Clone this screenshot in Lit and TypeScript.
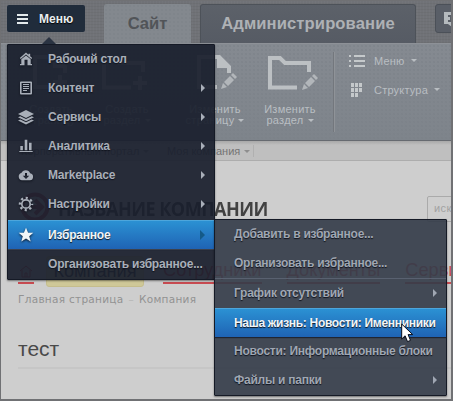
import { LitElement, html, css, svg, nothing } from "lit";
import { customElement, property } from "lit/decorators.js";
import { classMap } from "lit/directives/class-map.js";

const icons: Record<string, unknown> = {
  home: svg`<path d="M8 1.5 1.8 7l.9 1L8 3.4 13.3 8l.9-1-2-1.8V2.8h-1.7v1zM3.3 8.2V13H2v1.2h4.5V8.8h3v5.4H14V13h-1.3V8.2L8 4.4z"/>`,
  content: svg`<path fill-rule="evenodd" d="M3 1.5h10a1 1 0 0 1 1 1v11a1 1 0 0 1-1 1H3a1 1 0 0 1-1-1v-11a1 1 0 0 1 1-1zM3.6 3v10h8.8V3zM5 4h6v1.1H5zm0 2h6v1.1H5zm0 2h6v1.1H5zm0 2h4v1.1H5z"/>`,
  services: svg`<path d="M8 1 16 5 8 9 0 5zM2.3 7.2 8 10l5.7-2.8L16 8.3l-8 4-8-4zM2.3 10.5 8 13.3l5.7-2.8 2.3 1.1-8 4-8-4z"/>`,
  analytics: svg`<path d="M2.3 8h2.6v4.3H2.3zM6.7 1.7h2.6v10.6H6.7zM11 4.8h2.6v7.5H11zM1.3 12.9h13.4v1.2H1.3z"/>`,
  market: svg`<path fill-rule="evenodd" d="M4 13.3a3.7 3.7 0 0 1-.7-7.2A4.8 4.8 0 0 1 12.2 6.2a3.6 3.6 0 0 1-.3 7.1zM7 6v2.7H4.8L8 12l3.2-3.3H9V6z"/>`,
  settings: svg`<g fill="none" stroke="currentColor"><circle cx="8" cy="8" r="4.2" stroke-width="1.7"/><circle cx="8" cy="8" r="6.1" stroke-width="2.3" stroke-dasharray="2.2 2.59" stroke-dashoffset="1.1"/></g>`,
  star: svg`<path d="m8 .8 2.1 5h5.2l-4.1 3.4 1.5 5.3L8 11.4l-4.7 3.1 1.5-5.3L.7 5.8h5.2z"/>`,
};

interface Item {
  label: string;
  icon?: string;
  arrow?: boolean;
  active?: boolean;
  gap?: boolean;
}

const mainItems: Item[] = [
  { label: "Рабочий стол", icon: "home" },
  { label: "Контент", icon: "content", arrow: true },
  { label: "Сервисы", icon: "services", arrow: true },
  { label: "Аналитика", icon: "analytics", arrow: true },
  { label: "Marketplace", icon: "market", arrow: true },
  { label: "Настройки", icon: "settings", arrow: true },
  { label: "Избранное", icon: "star", arrow: true, active: true, gap: true },
  { label: "Организовать избранное...", gap: true },
];

const favItems: Item[] = [
  { label: "Добавить в избранное..." },
  { label: "Организовать избранное..." },
  { label: "График отсутствий", arrow: true, gap: true },
  { label: "Наша жизнь: Новости: Именниники", active: true },
  { label: "Новости: Информационные блоки" },
  { label: "Файлы и папки", arrow: true },
];

@customElement("drop-menu")
class DropMenu extends LitElement {
  @property({ attribute: false }) items: Item[] = [];
  @property({ type: Boolean, reflect: true }) sub = false;

  static styles = css`
    :host {
      display: block;
      box-sizing: border-box;
      border: 1px solid #151a26;
      border-radius: 1px;
      background: rgba(25, 30, 44, 0.92);
      box-shadow: 0 1px 2px rgba(0, 0, 0, 0.45);
      font: bold 12px "Liberation Sans", sans-serif;
      color: #a9afb9;
    }
    :host([sub]) {
      background: rgba(52, 59, 72, 0.91);
      color: #a0a7b3;
    }
    .row {
      display: flex;
      align-items: center;
      height: 29px;
      box-sizing: border-box;
      padding: 0 9px 1px 0;
      white-space: nowrap;
      text-shadow: 0 1px 1px #10141e;
    }
    .gap {
      border-top: 1px solid #3b414e;
      height: 30px;
    }
    :host([sub]) .gap {
      border-top-color: #596170;
    }
    .active {
      color: #f1f5f8;
      background: linear-gradient(#2b91d3, #1f63b4);
      border-top: 1px solid #4da6dc;
      box-shadow: 0 1px 1px #202532;
    }
    .active.gap {
      height: 29px;
      margin-top: 1px;
    }
    .icon {
      flex: 0 0 40px;
      display: flex;
      padding-left: 10px;
      box-sizing: border-box;
    }
    :host([sub]) .icon {
      flex-basis: 19px;
    }
    svg {
      width: 16px;
      height: 16px;
      fill: currentColor;
      filter: drop-shadow(0 1px 1px #10141e);
    }
    .label {
      flex: 1;
      letter-spacing: -0.19px;
    }
    :host([sub]) .label {
      letter-spacing: -0.25px;
    }
    :host([sub]) .active .label {
      letter-spacing: -0.3px;
    }
    .arrow {
      border: 4px solid transparent;
      border-left-color: currentColor;
      border-right: 0;
    }
    .active .arrow {
      border-width: 5px 0 5px 5px;
      border-left-color: #145a88;
    }
  `;

  render() {
    return this.items.map(
      (i) => html`<div class=${classMap({ row: true, gap: !!i.gap, active: !!i.active })}>
        <span class="icon">${i.icon ? html`<svg viewBox="0 0 16 16">${icons[i.icon]}</svg>` : nothing}</span>
        <span class="label">${i.label}</span>
        ${i.arrow ? html`<span class="arrow"></span>` : nothing}
      </div>`,
    );
  }
}

const pagePath = svg`<path d="M20 32H2V0M2 2h18" /><path class="fold" d="M17 0h6l11 11v7h-4v-5H20V3z" />`;
const folderPath = svg`<path d="M29 31.500H2V2h10l5 5h24v9" />`;
const plus = (x: number) => svg`<path d="M${x} 20v14M${x - 7} 27h14" />`;
const pencil = (x: number) => svg`<g transform="translate(${x} 18)" class="solid"><path d="m0 16 2-6 4 4zM3 9l6-6 4 4-6 6zM10 2l2-2 4 4-2 2z"/></g>`;

@customElement("app-root")
class AppRoot extends LitElement {
  static styles = css`
    :host {
      display: block;
      position: relative;
      box-sizing: border-box;
      width: 453px;
      height: 401px;
      overflow: hidden;
      background: #cecece;
      font-family: "Liberation Sans", sans-serif;
      white-space: nowrap;
    }
    .frame {
      position: absolute;
      inset: 0;
      border: 1px solid #707174;
      border-right-width: 2px;
      border-bottom-width: 2px;
      z-index: 5;
    }
    .header {
      height: 43px;
      display: flex;
      box-sizing: border-box;
      padding: 4px 0 0 7px;
      align-items: flex-start;
      background: repeating-linear-gradient(90deg, rgba(255, 255, 255, 0.02) 0 1px, transparent 1px 3px),
        repeating-linear-gradient(#6c6e72 0 1px, #707277 1px 3px);
    }
    .menu-btn {
      display: flex;
      flex: none;
      align-items: center;
      width: 78px;
      height: 27px;
      margin-top: 1px;
      box-sizing: border-box;
      padding-left: 10px;
      gap: 11px;
      border-radius: 2px;
      background: #202c3b;
      color: #e8edf0;
      font-weight: bold;
      font-size: 12px;
      text-shadow: 0 1px 1px #000;
    }
    .bars {
      width: 11px;
      height: 10px;
      background: linear-gradient(#e3eaec 0 2px, transparent 2px 4px, #e3eaec 4px 6px, transparent 6px 8px, #e3eaec 8px);
    }
    .tab {
      height: 39px;
      flex: none;
      display: flex;
      align-items: center;
      justify-content: center;
      box-sizing: border-box;
      border-radius: 3px 3px 0 0;
      font-size: 16.6px;
      font-weight: bold;
    }
    .site {
      width: 87px;
      margin-left: 19px;
      background: radial-gradient(#7d8288 20%, transparent 30%) 0 0 / 4px 4px, #83888e;
      color: #515458;
    }
    .admin {
      width: 216px;
      margin-left: 9px;
      background: linear-gradient(#5c6169, #565b64);
      border: 1px solid #4d5259;
      border-bottom: 0;
      color: #aeb1b5;
      letter-spacing: 0.1px;
    }
    .note {
      width: 40px;
      height: 29px;
      margin-left: 19px;
      box-sizing: border-box;
      padding: 7px 0 0 8px;
      border: 1px solid #4b5058;
      border-radius: 3px;
      background: #595e67;
      flex: none;
    }
    .note svg {
      width: 16px;
      height: 16px;
      fill: #b5babe;
      display: block;
    }
    .toolbar {
      display: flex;
      height: 98px;
      box-sizing: border-box;
      border-top: 1px solid #8d9197;
      border-bottom: 1px solid #666a70;
      padding-left: 13px;
      background: radial-gradient(#7b8188 20%, transparent 30%) 0 0 / 4px 4px, linear-gradient(#858a91, #7e848b);
      color: #b9bec2;
    }
    .tool {
      display: flex;
      flex-direction: column;
      align-items: center;
      width: 76px;
      padding-top: 12px;
      font-size: 11px;
      line-height: 11px;
      letter-spacing: 0.25px;
      text-align: center;
    }
    .tool.page {
      width: 100px;
    }
    .tool.last {
      width: 50px;
    }
    .tool svg {
      width: 50px;
      height: 37px;
      margin-bottom: 11px;
      fill: none;
      stroke: #bcc0c3;
      stroke-width: 4;
      flex: none;
      overflow: visible;
    }
    .tool .fold {
      fill: #bcc0c3;
      stroke: none;
    }
    .solid {
      fill: #b2b6ba;
      stroke: none;
    }
    .caret {
      display: inline-block;
      border: 3px solid transparent;
      border-top-color: currentColor;
      border-bottom: 0;
      vertical-align: 2px;
      margin-left: 4px;
    }
    .side {
      margin: 8px 0 8px 18px;
      border-left: 1px solid #73777d;
      box-shadow: inset 1px 0 #8f9398;
      padding-left: 15px;
      font-size: 11px;
      letter-spacing: 0.2px;
    }
    .link {
      display: flex;
      align-items: center;
      height: 29px;
      gap: 9px;
      margin-top: -6px;
      margin-bottom: 6px;
    }
    .link + .link {
      padding-left: 2px;
      gap: 11px;
    }
    .link .caret {
      margin-left: -3px;
      border-width: 3px 3px 0;
    }
    .link + .link .caret {
      margin-left: -5px;
    }
    .link svg {
      width: 16px;
      height: 14px;
      fill: #c5c9cb;
    }
    .link + .link svg {
      width: 12px;
    }
    .path {
      display: flex;
      align-items: center;
      height: 20px;
      box-sizing: border-box;
      background: linear-gradient(#a8a8a8, #bfbfbf 4px);
      border-bottom: 1px solid #adadad;
      padding: 1px 0 0 21px;
      color: #747474;
      font-size: 11px;
    }
    .path span {
      width: 146px;
    }
    .path .my {
      width: 87px;
      box-sizing: border-box;
      border-right: 1px solid #b0b0b0;
    }
    .path .caret {
      color: #8e8e8e;
    }
    .brand {
      display: flex;
      height: 63px;
      align-items: center;
      padding: 28px 0 0 20px;
      box-sizing: border-box;
    }
    .logo {
      width: 30px;
      height: 30px;
      fill: none;
      stroke: #9f4350;
      stroke-width: 4;
      flex: none;
    }
    .company {
      margin: 3px 0 0 8px;
      width: 369px;
      font: bold 20px "Open Sans", sans-serif;
      letter-spacing: -0.55px;
      color: #424242;
      flex: none;
      transform: scaleX(0.9);
      transform-origin: left;
    }
    .search {
      width: 40px;
      height: 26px;
      border: 1px solid #aaa;
      border-radius: 2px;
      box-sizing: border-box;
      padding: 5px 6px;
      font-size: 11px;
      color: #a2a2a2;
      margin-top: 4px;
      letter-spacing: 0.4px;
    }
    .nav {
      display: flex;
      margin-top: 32px;
      padding-left: 18px;
      height: 30px;
      font-size: 18.2px;
      color: #c84c53;
    }
    .nav span {
      flex: none;
      height: 28px;
      box-sizing: border-box;
      border-bottom: 2px solid #c84b51;
      padding-top: 4px;
      margin-right: 25px;
    }
    .nav .home {
      width: 16px;
      margin-right: 12px;
    }
    .home svg {
      width: 14px;
      height: 14px;
      margin: 4px 1px;
      fill: none;
      stroke: #c84b51;
    }
    .nav .current {
      width: 98px;
      height: 31px;
      border: 1px solid #c5bd8d;
      border-radius: 3px;
      background: #cfc898;
      color: #333;
      text-align: center;
      margin-right: 19px;
    }
    .crumbs {
      padding: 7px 0 0 18px;
      font: 10.5px "DejaVu Sans", sans-serif;
      letter-spacing: 0.28px;
      color: #929292;
      display: flex;
      gap: 5px;
    }
    .crumbs i {
      color: #b6b6b6;
      font-style: normal;
    }
    h1 {
      margin: 32px 0 0 18px;
      padding-bottom: 6px;
      border-bottom: 2px solid #c6c6c6;
      color: #494949;
      font: 21px "Liberation Sans", sans-serif;
      line-height: 24px;
    }
    .main {
      position: absolute;
      left: 7px;
      top: 44px;
      width: 208px;
    }
    .fav {
      position: absolute;
      left: 214px;
      top: 219px;
      width: 233px;
    }
    .tip {
      position: absolute;
      left: 42px;
      top: 37px;
      border: 7px solid transparent;
      border-top: 0;
      border-bottom-color: #2a3342;
    }
    .cursor {
      position: absolute;
      left: 401px;
      top: 323px;
      width: 14px;
      height: 21px;
    }
  `;

  render() {
    const caret = html`<i class="caret"></i>`;
    return html`
      <div class="header">
        <div class="menu-btn"><i class="bars"></i>Меню</div>
        <div class="tab site">Сайт</div>
        <div class="tab admin">Администрирование</div>
        <div class="note"><svg viewBox="0 0 16 16"><path fill-rule="evenodd" d="M0 0h16v12H8v3l-4-3H0zM4 3v2h2v3H4v2h6V8H8V3z" /></svg></div>
      </div>
      <div class="toolbar">
        <div class="tool"><svg viewBox="0 0 50 37"><g transform="translate(7 -1)">${pagePath}${plus(27)}</g></svg>Создать<br />страницу</div>
        <div class="tool"><svg viewBox="0 0 50 37">${folderPath}${plus(38)}</svg>Создать<span>раздел${caret}</span></div>
        <div class="tool page"><svg viewBox="0 0 50 37"><g transform="translate(7 -1)">${pagePath}${pencil(24)}</g></svg>Изменить<span>страницу${caret}</span></div>
        <div class="tool last"><svg viewBox="0 0 50 37"><g transform="translate(3)">${folderPath}${pencil(34)}</g></svg>Изменить<span>раздел${caret}</span></div>
        <div class="side">
          <div class="link"><svg viewBox="0 0 16 14"><path d="M0 1h2v2H0zm5 0h11v2H5zM0 6h2v2H0zm5 0h11v2H5zM0 11h2v2H0zm5 0h11v2H5z" /></svg>Меню ${caret}</div>
          <div class="link"><svg viewBox="0 0 12 14"><path d="M0 0h3v4H0zm4 0h3v4H4zm4 0h3v4H8zM0 5h3v4H0zm4 0h3v4H4zm4 0h3v4H8zM4 10h3v4H4zM0 10h3v4H0z" /></svg>Структура ${caret}</div>
        </div>
      </div>
      <div class="path"><span>Корпоративный портал${caret}</span><span class="my">Моя компания${caret}</span></div>
      <div class="brand">
        <svg class="logo" viewBox="0 0 30 30"><circle cx="15" cy="15" r="12.5" /><path d="M7 15h14M15 8l7 7-7 7" /></svg>
        <div class="company">НАЗВАНИЕ КОМПАНИИ</div>
        <div class="search">искать</div>
      </div>
      <div class="nav">
        <span class="home"><svg viewBox="0 0 14 14"><path d="M1 7l6-5 6 5M3 6v7h8V6M6 13V9h2v4" /></svg></span>
        <span class="current">Компания</span><span>Сотрудники</span><span>Документы</span><span>Сервисы</span>
      </div>
      <div class="crumbs">Главная страница<i>–</i>Компания</div>
      <h1>тест</h1>
      <drop-menu class="main" .items=${mainItems}></drop-menu>
      <i class="tip"></i>
      <drop-menu class="fav" sub .items=${favItems}></drop-menu>
      <svg class="cursor" viewBox="0 0 14 21"><path d="M.7 1v15l3.4-3.2 2.4 5.8 3-1.2-2.4-5.8h4.6z" fill="#fff" stroke="#080c18" /></svg>
      <div class="frame"></div>
    `;
  }
}
